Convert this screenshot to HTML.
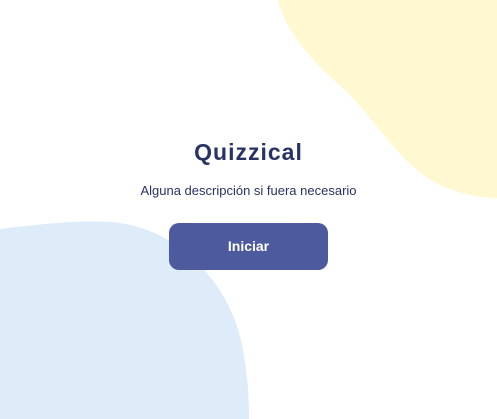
<!DOCTYPE html>
<html><head><meta charset="utf-8"><style>
html,body{margin:0;padding:0;width:497px;height:419px;overflow:hidden;background:#fff;font-family:"Liberation Sans",sans-serif;}
svg{position:absolute;left:0;top:0}
.t{position:absolute;left:0;width:497px;text-align:center;color:#293264}
h1{position:absolute;left:0;width:497px;text-align:center;margin:0;top:139px;font-size:23px;font-weight:bold;letter-spacing:1px;color:#293264}
.d{top:183px;font-size:13px;color:#293264}
.b{position:absolute;left:169px;top:223px;width:159px;height:47px;border-radius:10px;background:#4d5b9e;color:#fff;font-weight:bold;font-size:14px;line-height:46px;text-align:center}
</style></head><body>
<svg width="497" height="419">
<path d="M278 0 C285 30 310 60 345 90 C380 125 400 165 440 185 C465 196 485 198 497 198 L497 0 Z" fill="#fff8d1"/>
<path d="M0 229 C40 224 80 220 110 222 C170 226 215 270 235 320 C246 350 249 390 249 419 L0 419 Z" fill="#deebf8"/>
</svg>
<h1>Quizzical</h1>
<div class="t d">Alguna descripción si fuera necesario</div>
<div class="b">Iniciar</div>
</body></html>
